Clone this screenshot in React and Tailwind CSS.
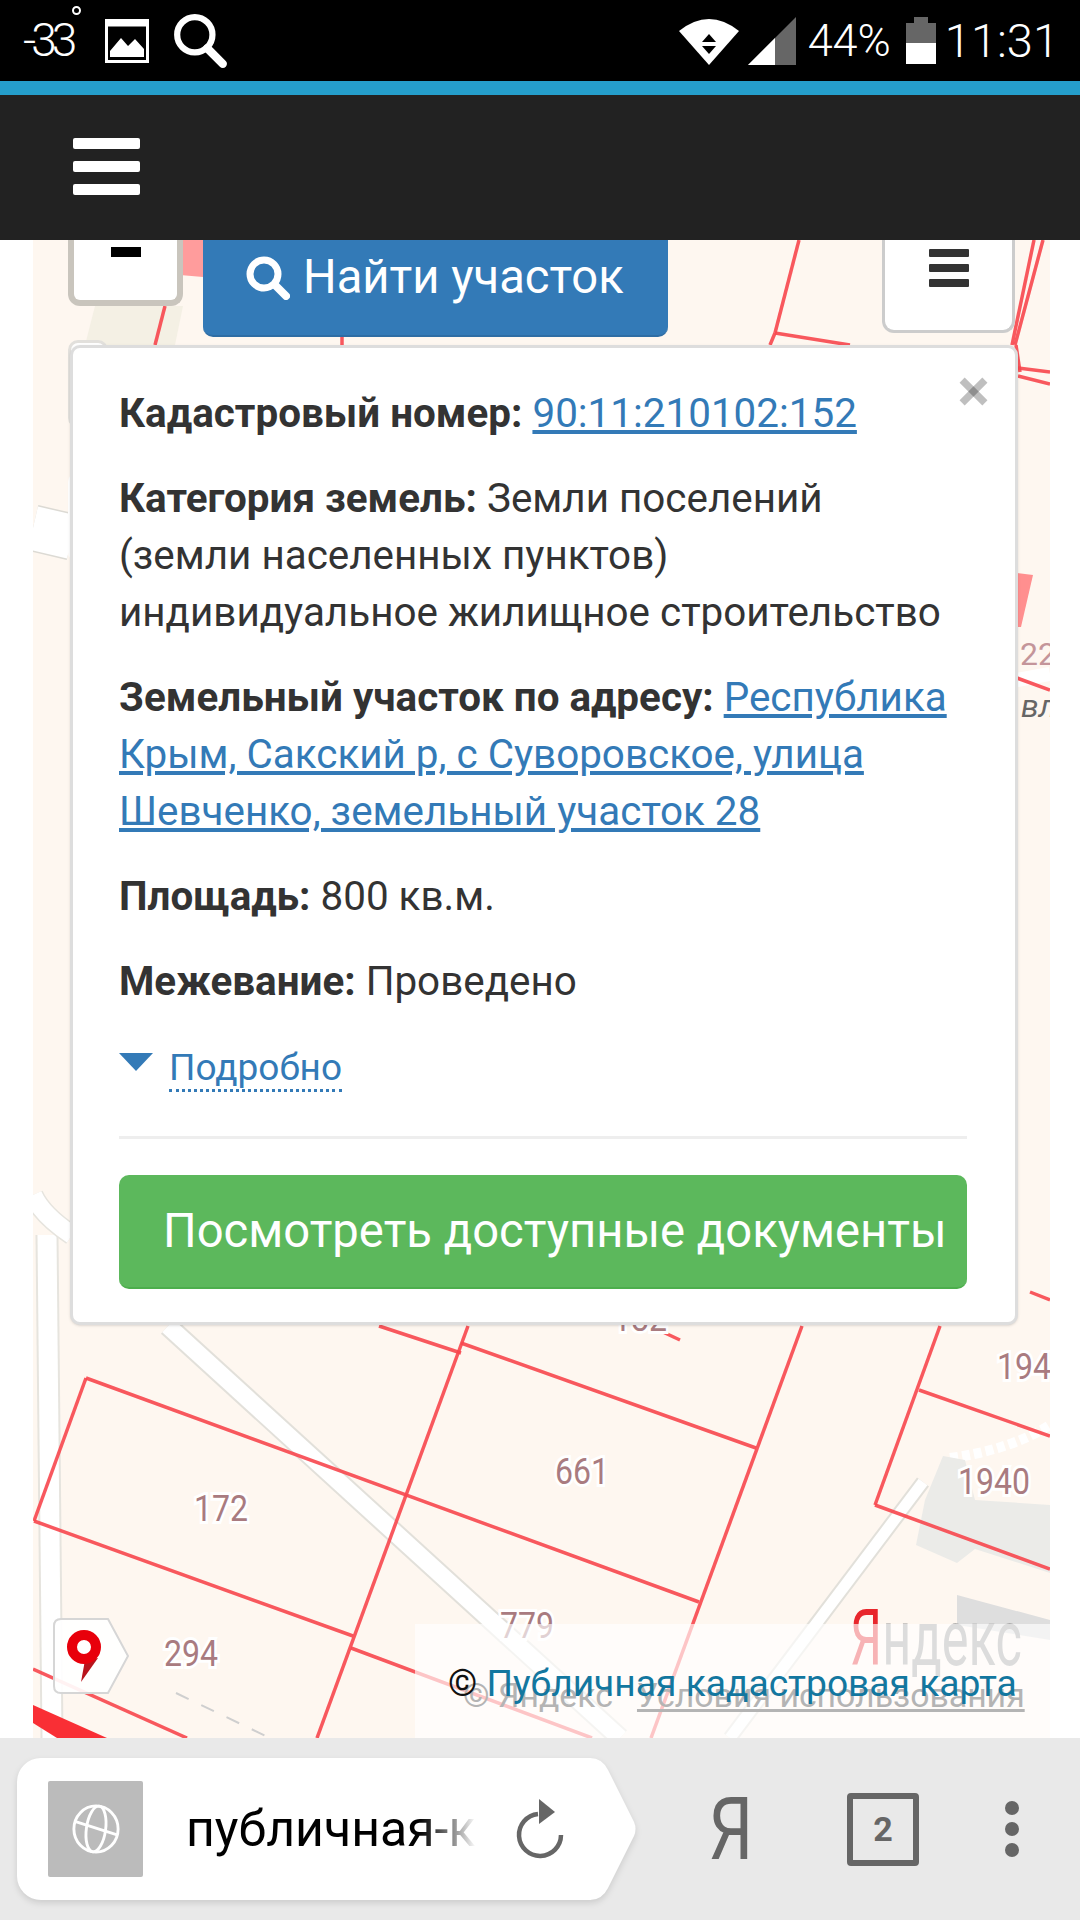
import React from "react";

const redLines = [
  [86, 1378, 34, 1521],
  [86, 1378, 699, 1602],
  [34, 1521, 353, 1636],
  [468, 1326, 317, 1738],
  [461, 1343, 756, 1448],
  [379, 1326, 461, 1353],
  [802, 1326, 651, 1738],
  [940, 1326, 875, 1505],
  [919, 1390, 1050, 1436],
  [875, 1505, 1050, 1569],
  [351, 1648, 592, 1738],
  [33, 1669, 187, 1738],
  [799, 240, 775, 333],
  [775, 333, 770, 345],
  [775, 333, 850, 345],
  [1043, 240, 1015, 345],
  [1034, 240, 1012, 345],
  [1016, 345, 1020, 372],
  [1018, 368, 1050, 372],
  [1018, 376, 1050, 384],
  [165, 306, 155, 345],
  [180, 240, 178, 276],
  [342, 337, 342, 345],
  [1017, 678, 1050, 690],
  [1030, 1292, 1050, 1300],
  [650, 1326, 680, 1340],
];

const labels = [
  ["172", 221, 1521],
  ["661", 582, 1484],
  ["294", 191, 1666],
  ["779", 527, 1638],
  ["1940", 994, 1494],
  ["194", 1024, 1379],
  ["182", 640, 1331],
];

const MapLayer = () => (
  <svg viewBox="33 240 1017 1498" className="absolute inset-0 w-full h-full">
    {/* roads */}
    <path d="M95 306 L183 306 L175 345 L85 345 Z" fill="#f4f0e4" />
    <path d="M168 1326 L620 1738" stroke="#e2e0da" strokeWidth="21" fill="none" />
    <path d="M168 1326 L620 1738" stroke="#ffffff" strokeWidth="17" fill="none" />
    <path d="M923 1482 L730 1738" stroke="#e2e0da" strokeWidth="15" fill="none" />
    <path d="M923 1482 L730 1738" stroke="#ffffff" strokeWidth="11" fill="none" />
    <path d="M47 1235 L52 1738" stroke="#e6e4de" strokeWidth="23" fill="none" />
    <path d="M47 1235 L52 1738" stroke="#ffffff" strokeWidth="19" fill="none" />
    <path d="M33 1195 Q42 1215 72 1235" stroke="#e6e4de" strokeWidth="21" fill="none" />
    <path d="M33 1195 Q42 1215 72 1235" stroke="#ffffff" strokeWidth="18" fill="none" />
    <path d="M33 528 L72 537" stroke="#dcdad4" strokeWidth="47" fill="none" />
    <path d="M33 528 L72 537" stroke="#ffffff" strokeWidth="44" fill="none" />
    <path d="M1017 680 L1050 674" stroke="#ffffff" strokeWidth="14" fill="none" />
    <path d="M950 1458 Q1010 1450 1050 1425" stroke="#ffffff" strokeWidth="10" strokeDasharray="8 4" fill="none" />
    <path d="M176 1693 L270 1738" stroke="#cfcfcf" strokeWidth="2" strokeDasharray="14 14" fill="none" />

    {/* buildings */}
    <path d="M943 1456 L925 1500 L916 1545 L957 1563 L975 1549 L1050 1573 L1050 1505 L975 1500 L965 1460 Z" fill="#ebebe8" />
    <path d="M957 1595 L1050 1620 L1050 1640 L957 1625 Z" fill="#dedede" />
    <path d="M180 240 L203 240 L203 277 L180 275 Z" fill="#ff9c9c" />
    <path d="M1017 573 L1033 575 L1021 627 L1017 627 Z" fill="#ff8f8f" />

    {/* parcels */}
    {redLines.map(([x1, y1, x2, y2], i) => (
      <line key={i} x1={x1} y1={y1} x2={x2} y2={y2} stroke="#f8474e" strokeWidth="3.5" opacity="0.9" />
    ))}
    <path d="M33 1705 L107 1738 L57 1738 L33 1723 Z" fill="#f92f35" />

    {labels.map(([t, x, y]) => (
      <text
        key={t}
        x={x}
        y={y}
        textAnchor="middle"
        fontFamily="Roboto, sans-serif"
        fontSize="36"
        fill="#a97b80"
        stroke="#ffffff"
        strokeWidth="6"
        paintOrder="stroke"
        textLength={t.length * 18}
        lengthAdjust="spacingAndGlyphs"
      >
        {t}
      </text>
    ))}
    <text x="1020" y="665" fontFamily="Roboto, sans-serif" fontSize="32" fill="#c4959a">22</text>
    <text x="1021" y="717" fontFamily="Roboto, sans-serif" fontSize="32" fontStyle="italic" fill="#666666">вл</text>

    {/* yandex logo sits under the white attribution strip */}
    <text x="850" y="1665" fontFamily="Roboto, sans-serif" fontSize="78" textLength="172" lengthAdjust="spacingAndGlyphs" fill="#9c9c9c">
      <tspan fill="#e8262c">Я</tspan>ндекс
    </text>
  </svg>
);

const Attribution = () => (
  <div className="absolute left-[382px] right-0 bottom-0 h-[114px] bg-white/65">
    <div className="absolute left-[48px] top-[52px] flex gap-[24px] text-[33.8px] leading-[40px] text-[#b4b4b4] whitespace-nowrap">
      <span>© Яндекс</span>
      <span className="underline decoration-[3px]">Условия использования</span>
    </div>
    <div className="absolute left-[33px] top-[37px] text-[37.2px] leading-[44px] text-[#111] whitespace-nowrap">
      © <span className="text-[#13779f]">Публичная кадастровая карта</span>
    </div>
  </div>
);

const InfoPopup = () => (
  <div className="absolute left-[37px] top-[105px] w-[948px] h-[980px] bg-white border-[3px] border-[#dddddd] rounded-[10px] pt-[37px] pl-[46px] pr-[48px] text-[40.4px] leading-[57px] text-[#333333] shadow-sm">
    <svg viewBox="0 0 28 28" className="absolute right-[27px] top-[29px] w-[29px] h-[29px]">
      <path d="M3 3 L25 25" stroke="#000" strokeOpacity="0.25" strokeWidth="7" />
      <path d="M25 3 L3 25" stroke="#000" strokeOpacity="0.25" strokeWidth="7" />
    </svg>
    <p className="mb-[28px]">
      <b>Кадастровый номер:</b> <a className="text-[#337ab7] underline">90:11:210102:152</a>
    </p>
    <p className="mb-[28px]">
      <b>Категория земель:</b> Земли поселений
      <br />
      (земли населенных пунктов)
      <br />
      индивидуальное жилищное строительство
    </p>
    <p className="mb-[28px]">
      <b>Земельный участок по адресу:</b>{" "}
      <a className="text-[#337ab7] underline">Республика Крым, Сакский р, с Суворовское, улица Шевченко, земельный участок 28</a>
    </p>
    <p className="mb-[28px]">
      <b>Площадь:</b> 800 кв.м.
    </p>
    <p className="mb-[28px]">
      <b>Межевание:</b> Проведено
    </p>
    <div className="flex items-center pt-[9px]">
      <svg viewBox="0 0 34 18" className="w-[34px] h-[18px] mb-[15px]">
        <path d="M0 0 H34 L17 18 Z" fill="#337ab7" />
      </svg>
      <a className="ml-[16px] text-[#337ab7] leading-[42px] border-b-[3px] border-dotted border-[#337ab7] text-[37px]">Подробно</a>
    </div>
    <div className="mt-[44px] h-[3px] bg-[#eeeeee]" />
    <div className="mt-[36px] h-[114px] rounded-[10px] bg-[#5cb85c] border-b-[2px] border-[#4cae4c] pl-[44px] flex items-center text-white text-[47.2px] whitespace-nowrap">
      Посмотреть доступные документы
    </div>
  </div>
);

const MapControls = () => (
  <>
    {/* stubs of the other map controls, mostly hidden by the popup */}
    <div className="absolute left-[35px] top-[100px] w-[40px] h-[88px] bg-white border-[3px] border-[#e2e0dc] rounded-[10px]" />
    <div className="absolute left-[35px] top-[232px] w-[40px] h-[90px] bg-white rounded-[10px]" />
    <div className="absolute left-[35px] -top-[20px] w-[115px] h-[86px] bg-white border-[6px] border-t-0 border-[#c9c5bd] rounded-b-[12px] flex justify-center pt-[27px]">
      <div className="w-[30px] h-[10px] bg-black" />
    </div>
    <div className="absolute left-[170px] top-0 w-[465px] h-[97px] bg-[#337ab7] border-b-[2px] border-[#2e6da4] rounded-b-[10px] flex items-center pl-[43px] pb-[20px] gap-[13px] text-white text-[47.2px]">
      <svg viewBox="0 0 44 44" className="w-[44px] h-[44px]">
        <circle cx="18" cy="18" r="14" fill="none" stroke="#fff" strokeWidth="7" />
        <path d="M29 29 L40 40" stroke="#fff" strokeWidth="8" strokeLinecap="round" />
      </svg>
      <span>Найти участок</span>
    </div>
    <div className="absolute left-[849px] top-0 w-[133px] h-[93px] bg-white border-[3px] border-t-0 border-[#cccccc] rounded-b-[12px] flex flex-col items-center gap-[7px] pt-[9px]">
      <div className="w-[40px] h-[8px] rounded-[1px] bg-[#333333]" />
      <div className="w-[40px] h-[8px] rounded-[1px] bg-[#333333]" />
      <div className="w-[40px] h-[8px] rounded-[1px] bg-[#333333]" />
    </div>
    <svg viewBox="0 0 76 76" className="absolute left-[20px] bottom-[44px] w-[76px] h-[76px]">
      <path d="M8 1 H55 L75 38 L55 75 H8 Q1 75 1 68 V8 Q1 1 8 1 Z" fill="#fff" fillOpacity="0.92" stroke="#d6d6d6" strokeWidth="2" />
      <path d="M28 64 L32 42 L45 40 Z" fill="#b8141c" />
      <circle cx="31" cy="29" r="12" fill="none" stroke="#e8000b" strokeWidth="10" />
    </svg>
  </>
);

const StatusBar = () => (
  <div className="h-[81px] bg-black flex items-center justify-between text-white font-light pl-[23px] pr-[21px]">
    <div className="flex items-center">
      <div className="relative w-[82px] text-[46px]">
        <span className="tracking-[-5px] leading-[48px]">-33</span>
        <span className="absolute left-[49px] top-0 w-[9px] h-[9px] rounded-full border-[2px] border-white" />
      </div>
      <svg viewBox="0 0 44 44" className="w-[44px] h-[44px]">
        <rect x="1.5" y="1.5" width="41" height="41" fill="none" stroke="#fff" strokeWidth="3" />
        <rect x="1.5" y="1.5" width="41" height="6" fill="#fff" />
        <path d="M5 38 L5 32 L16 19 L23 27 L30 20 L39 30 L39 38 Z" fill="#fff" />
      </svg>
      <svg viewBox="0 0 54 54" className="ml-[23px] w-[56px] h-[56px]">
        <circle cx="22" cy="21" r="17" fill="none" stroke="#fff" strokeWidth="6" />
        <path d="M34 34 L49 49" stroke="#fff" strokeWidth="8" strokeLinecap="round" />
      </svg>
    </div>
    <div className="flex items-center">
      <svg viewBox="0 0 60 48" className="w-[60px] h-[48px]">
        <path d="M0 14 Q30 -10 60 14 L30 48 Z" fill="#fff" />
        <path d="M30 17 L37 25 H23 Z M23 29 H37 L30 37 Z" fill="#000" />
      </svg>
      <svg viewBox="0 0 48 48" className="ml-[9px] w-[48px] h-[48px]">
        <path d="M0 48 L48 0 V48 Z" fill="#666666" />
        <path d="M0 48 L27 21 V48 Z" fill="#fff" />
      </svg>
      <span className="ml-[12px] text-[45px] leading-[48px]">44%</span>
      <svg viewBox="0 0 30 47" className="ml-[15px] w-[30px] h-[47px]">
        <path d="M8 0 H22 V6 H30 V47 H0 V6 H8 Z" fill="#666666" />
        <rect x="0" y="26" width="30" height="21" fill="#fff" />
      </svg>
      <span className="ml-[9px] text-[47px] leading-[48px]">11:31</span>
    </div>
  </div>
);

const NavBar = () => (
  <div className="h-[145px] bg-[#222222] flex flex-col justify-center pl-[73px] gap-[12px] pb-[2px]">
    <div className="w-[67px] h-[11px] rounded-[2px] bg-white" />
    <div className="w-[67px] h-[11px] rounded-[2px] bg-white" />
    <div className="w-[67px] h-[11px] rounded-[2px] bg-white" />
  </div>
);

const BrowserBar = () => (
  <div className="h-[182px] bg-[#e9e9e9] flex items-center pl-[17px]">
    <div className="flex h-[142px] drop-shadow-md">
      <div className="w-[574px] bg-white rounded-l-[24px] flex items-center pl-[31px]">
        <div className="w-[95px] h-[96px] rounded-[2px] bg-[#bbbbbb] flex items-center justify-center">
          <svg viewBox="0 0 52 52" className="w-[50px] h-[52px]" fill="none" stroke="#fff" strokeWidth="3">
            <ellipse cx="26" cy="26" rx="23" ry="24" />
            <ellipse cx="26" cy="26" rx="10" ry="24" transform="rotate(8 26 26)" />
            <path d="M4 18 L48 32" />
          </svg>
        </div>
        <span className="ml-[43px] w-[290px] text-[50px] text-transparent bg-linear-to-r from-black from-[78%] to-white bg-clip-text whitespace-nowrap overflow-hidden">
          публичная-к
        </span>
        <svg viewBox="0 0 50 60" className="ml-[39px] w-[50px] h-[60px]" fill="none">
          <path d="M23 15 A21 21 0 1 0 46 36" stroke="#666666" strokeWidth="4.5" />
          <path d="M24 0 L40 13 L24 25 Z" fill="#666666" />
        </svg>
      </div>
      <svg viewBox="0 0 46 142" className="w-[46px] h-[142px] -ml-[1px]">
        <path d="M0 0 Q12 0 18 12 L44 64 Q47 71 44 78 L18 130 Q12 142 0 142 Z" fill="#fff" />
      </svg>
    </div>
    <span className="ml-[68px] w-[46px] text-[88px] leading-[88px] text-[#666666] scale-x-[0.8]">Я</span>
    <div className="ml-[97px] w-[72px] h-[73px] border-[6px] border-[#666666] rounded-[4px] flex items-center justify-center text-[#666666] text-[34px] font-bold">
      2
    </div>
    <div className="ml-[86px] flex flex-col gap-[7px]">
      <div className="w-[14px] h-[14px] rounded-full bg-[#666666]" />
      <div className="w-[14px] h-[14px] rounded-full bg-[#666666]" />
      <div className="w-[14px] h-[14px] rounded-full bg-[#666666]" />
    </div>
  </div>
);

export default function App() {
  return (
    <div className="w-[1080px] h-[1920px] flex flex-col bg-white overflow-hidden [font-family:Roboto,sans-serif]">
      <StatusBar />
      <div className="h-[14px] bg-[#259ecb]" />
      <NavBar />
      <div className="flex-1 mr-[30px] ml-[33px] relative overflow-hidden bg-[#fef7f0]">
        <MapLayer />
        <MapControls />
        <Attribution />
        <InfoPopup />
      </div>
      <BrowserBar />
    </div>
  );
}
